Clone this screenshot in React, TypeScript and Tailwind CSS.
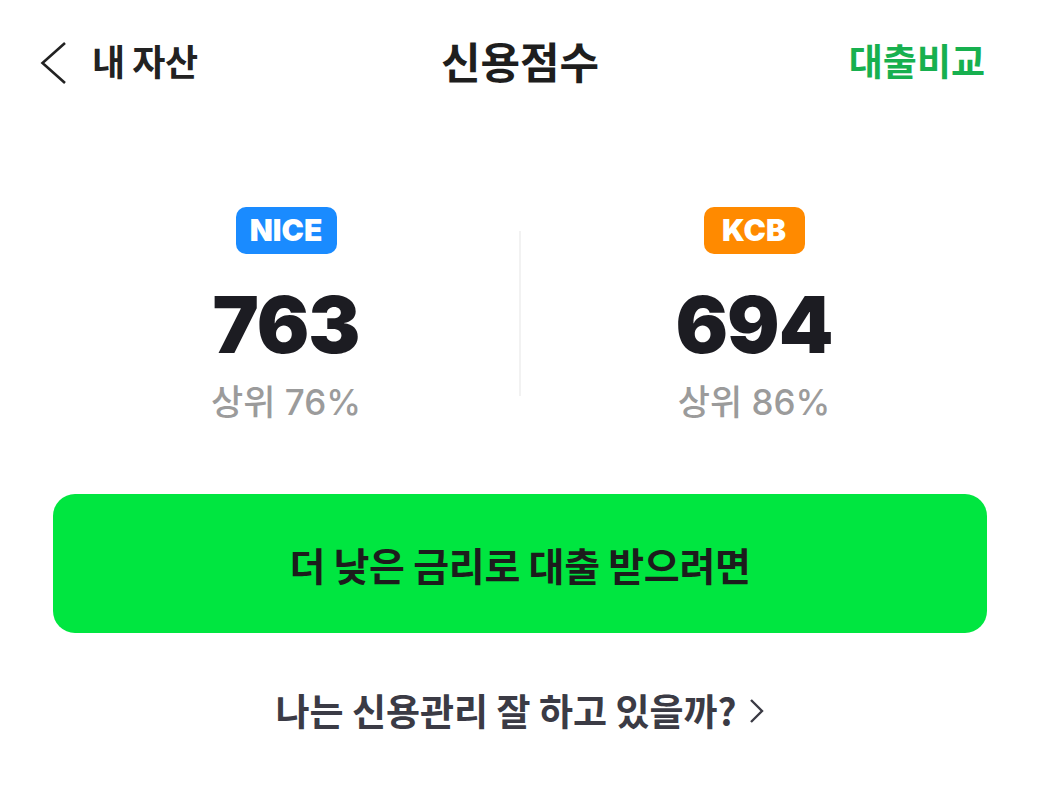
const kr = { fontFamily: '"Noto Sans CJK KR", "Noto Sans", sans-serif' };
const num = { fontFamily: 'Inter, "Noto Sans CJK KR", sans-serif' };

interface Score {
  agency: string;
  badgeColor: string;
  score: number;
  rank: string;
}

const scores: Score[] = [
  { agency: 'NICE', badgeColor: 'bg-[#1a8bff]', score: 763, rank: '76%' },
  { agency: 'KCB', badgeColor: 'bg-[#ff8a00]', score: 694, rank: '86%' },
];

function ScoreColumn({ s }: { s: Score }) {
  return (
    <div className="flex flex-1 flex-col items-center">
      <div
        className={`${s.badgeColor} flex h-[47px] w-[101px] items-center justify-center rounded-[10px] text-[30px] leading-[47px] font-black text-white`}
        style={num}
      >
        {s.agency}
      </div>
      <div
        className="mt-[32px] text-[78px] leading-[78px] font-black tracking-[-1px] text-[#1c1c22]"
        style={num}
      >
        {s.score}
      </div>
      <div className="mt-[19px] text-[35px] leading-[34px] font-medium text-[#9b9b9b]" style={num}>
        <span style={kr}>상위</span> {s.rank}
      </div>
    </div>
  );
}

export default function App() {
  return (
    <div className="h-[793px] w-full bg-white" style={kr}>
      {/* Header */}
      <div className="grid h-[120px] grid-cols-[1fr_auto_1fr] items-center px-[40px]">
        <div className="flex items-center">
          <svg width="27" height="44" viewBox="0 0 27 44" className="mt-[6px]">
            <polyline
              points="25,2 2.5,22 25,42"
              fill="none"
              stroke="#222"
              strokeWidth="2.6"
              strokeLinejoin="miter"
            />
          </svg>
          <span className="ml-[25px] text-[36px] leading-[40px] font-bold tracking-[-0.5px] text-[#222]">
            내 자산
          </span>
        </div>
        <div className="text-[43px] leading-[48px] font-bold text-[#1e1e1e]">신용점수</div>
        <div className="mr-[15px] text-right text-[37px] leading-[40px] font-bold text-[#17b04f]">
          대출비교
        </div>
      </div>

      <div className="px-[53px]">
        {/* Scores */}
        <div className="flex items-center pt-[87px]">
          <ScoreColumn s={scores[0]} />
          <div className="h-[165px] w-[2px] bg-[#f2f2f2]" />
          <ScoreColumn s={scores[1]} />
        </div>

        {/* CTA */}
        <button className="mt-[75px] flex h-[139px] w-full items-center justify-center rounded-[22px] bg-[#00e640] text-[39px] leading-[44px] font-bold tracking-[-0.3px] text-[#1c1c1c]">
          더 낮은 금리로 대출 받으려면
        </button>

        <div className="mt-[57px] flex items-center justify-center text-[37px] leading-[40px] font-bold text-[#3b3b45]">
          나는 신용관리 잘 하고 있을까?
          <svg width="16" height="26" viewBox="0 0 16 26" className="ml-[12px] mt-[2px]">
            <polyline
              points="2,2 13,13 2,24"
              fill="none"
              stroke="#3b3b45"
              strokeWidth="2.4"
              strokeLinejoin="miter"
            />
          </svg>
        </div>
      </div>
    </div>
  );
}
